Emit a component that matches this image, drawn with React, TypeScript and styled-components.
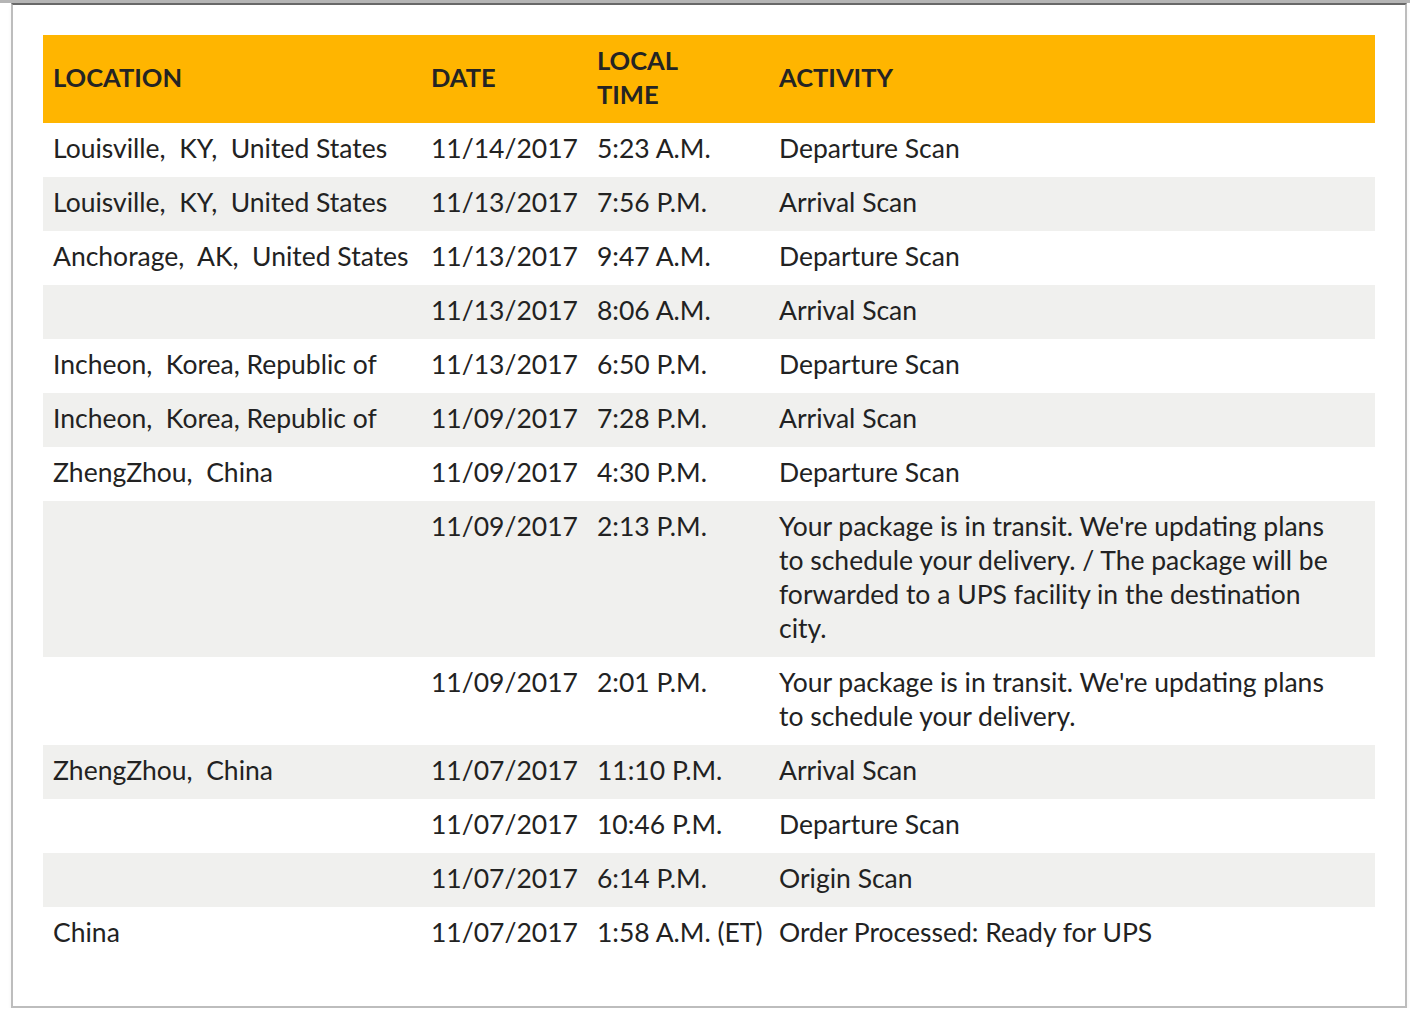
import React from "react";
import styled, { createGlobalStyle } from "styled-components";

interface ScanRow {
  location: string;
  date: string;
  time: string;
  activity: string;
}

const rows: ScanRow[] = [
  { location: "Louisville,  KY,  United States", date: "11/14/2017", time: "5:23 A.M.", activity: "Departure Scan" },
  { location: "Louisville,  KY,  United States", date: "11/13/2017", time: "7:56 P.M.", activity: "Arrival Scan" },
  { location: "Anchorage,  AK,  United States", date: "11/13/2017", time: "9:47 A.M.", activity: "Departure Scan" },
  { location: "", date: "11/13/2017", time: "8:06 A.M.", activity: "Arrival Scan" },
  { location: "Incheon,  Korea, Republic of", date: "11/13/2017", time: "6:50 P.M.", activity: "Departure Scan" },
  { location: "Incheon,  Korea, Republic of", date: "11/09/2017", time: "7:28 P.M.", activity: "Arrival Scan" },
  { location: "ZhengZhou,  China", date: "11/09/2017", time: "4:30 P.M.", activity: "Departure Scan" },
  {
    location: "",
    date: "11/09/2017",
    time: "2:13 P.M.",
    activity:
      "Your package is in transit. We're updating plans to schedule your delivery. / The package will be forwarded to a UPS facility in the destination city.",
  },
  {
    location: "",
    date: "11/09/2017",
    time: "2:01 P.M.",
    activity: "Your package is in transit. We're updating plans to schedule your delivery.",
  },
  { location: "ZhengZhou,  China", date: "11/07/2017", time: "11:10 P.M.", activity: "Arrival Scan" },
  { location: "", date: "11/07/2017", time: "10:46 P.M.", activity: "Departure Scan" },
  { location: "", date: "11/07/2017", time: "6:14 P.M.", activity: "Origin Scan" },
  { location: "China", date: "11/07/2017", time: "1:58 A.M. (ET)", activity: "Order Processed: Ready for UPS" },
];

const GlobalStyle = createGlobalStyle`
  body {
    margin: 0;
    background: #fff;
    font-family: Lato, "Open Sans", sans-serif;
    color: #222;
  }
`;

const TopBand = styled.div`
  height: 3px;
  background: #b5b5b5;
`;

const Panel = styled.section`
  margin-left: 11px;
  width: 1396px;
  box-sizing: border-box;
  border: 2px solid #bdbdbd;
  border-top-color: #686868;
  padding: 30px 30px 45px;
  box-shadow: 0 3px 4px rgba(0, 0, 0, 0.05);
`;

const Table = styled.table`
  width: 1332px;
  border-collapse: collapse;
  table-layout: fixed;
  font-size: 26.5px;
  line-height: 34px;
`;

const HeadCell = styled.th`
  background: #ffb500;
  text-align: left;
  vertical-align: middle;
  padding: 8px 10px 12px;
  font-size: 25.5px;
  font-weight: 700;
  text-transform: uppercase;
  color: #242424;
`;

const Row = styled.tr<{ $shaded: boolean }>`
  background: ${(p) => (p.$shaded ? "#f0f0ee" : "#fff")};
`;

const Cell = styled.td<{ $nowrap?: boolean; $wide?: boolean }>`
  padding: 8px ${(p) => (p.$wide ? "30px" : "10px")} 12px 10px;
  vertical-align: top;
  white-space: ${(p) => (p.$nowrap ? "nowrap" : "pre-wrap")};
  color: #222;
`;

export default function App() {
  return (
    <>
      <GlobalStyle />
      <TopBand />
      <Panel>
        <Table>
          <colgroup>
            <col style={{ width: 378 }} />
            <col style={{ width: 166 }} />
            <col style={{ width: 182 }} />
            <col style={{ width: 606 }} />
          </colgroup>
          <thead>
            <tr>
              <HeadCell>Location</HeadCell>
              <HeadCell>Date</HeadCell>
              <HeadCell>
                Local
                <br />
                Time
              </HeadCell>
              <HeadCell>Activity</HeadCell>
            </tr>
          </thead>
          <tbody>
            {rows.map((r, i) => (
              <Row key={i} $shaded={i % 2 === 1}>
                <Cell>{r.location}</Cell>
                <Cell $nowrap>{r.date}</Cell>
                <Cell $nowrap>{r.time}</Cell>
                <Cell $wide>{r.activity}</Cell>
              </Row>
            ))}
          </tbody>
        </Table>
      </Panel>
    </>
  );
}
